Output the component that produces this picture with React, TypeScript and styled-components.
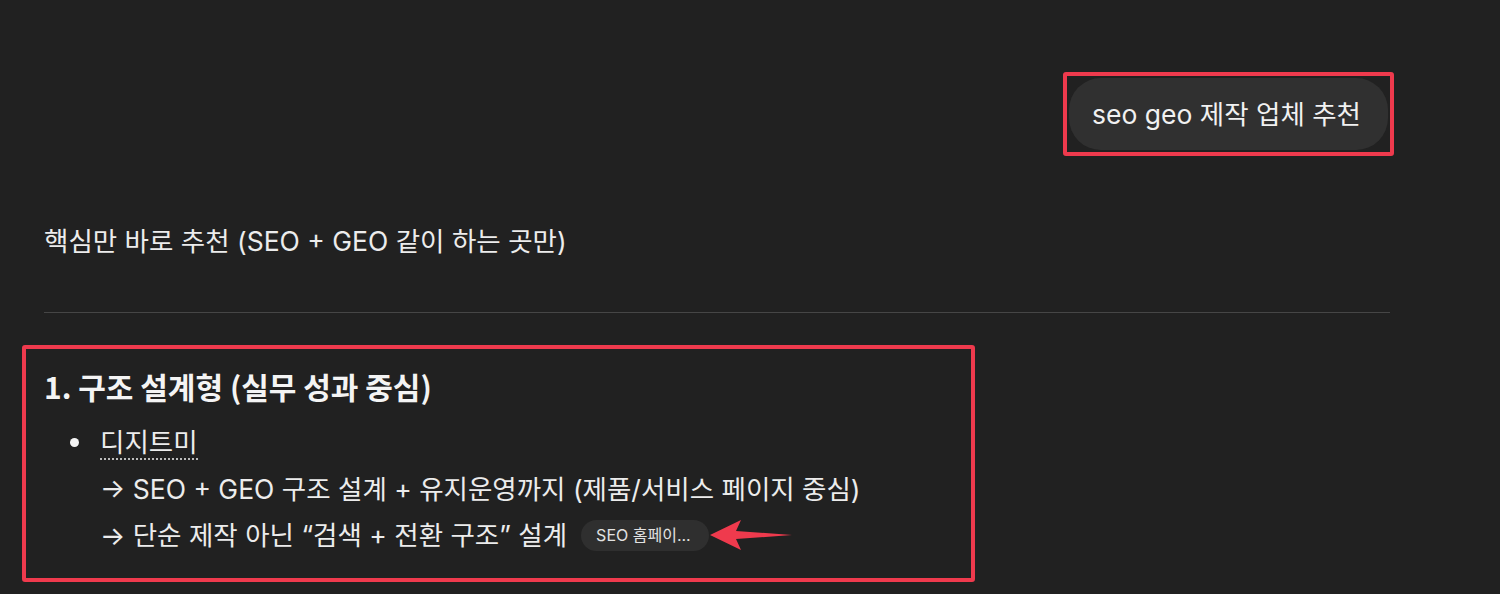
import React from 'react';
import styled, { createGlobalStyle } from 'styled-components';

const GlobalStyle = createGlobalStyle`
    html, body {
        margin: 0;
        padding: 0;
        background: #212121;
        overflow: hidden;
    }
    body {
        color: #ececec;
        font-family: Inter, 'Noto Sans CJK KR', 'Noto Sans', sans-serif;
        -webkit-font-smoothing: antialiased;
    }
`;

const ANNOTATION_RED = '#ef3a4d';

const Page = styled.div`
    box-sizing: border-box;
    width: 1390px;
    height: 594px;
    padding: 72px 0 0 44px;
`;

const UserRow = styled.div`
    display: flex;
    justify-content: flex-end;
    margin-right: -4px;
`;

const Annotation = styled.div<{ $pad: number }>`
    border: 4px solid ${ANNOTATION_RED};
    border-radius: 3px;
    padding: ${({ $pad }) => $pad}px;
`;

const Bubble = styled.div`
    display: flex;
    align-items: center;
    box-sizing: border-box;
    height: 72px;
    padding: 0 27px 4px 23px;
    border-radius: 32px;
    background: #303030;
    font-size: 26.5px;
    color: #f1f1f1;
`;

const Paragraph = styled.p`
    margin: 62px 0 0;
    font-size: 26.5px;
    line-height: 46px;
`;

const Divider = styled.hr`
    margin: 48px 0 0;
    border: none;
    border-top: 1.5px solid #464646;
`;

const Section = styled(Annotation)`
    margin: 32px 0 0 -22px;
    width: 911px;
    padding: 12px 16px 20px 18px;
`;

const Heading = styled.h3`
    margin: 0;
    font-size: 30px;
    font-weight: 600;
    line-height: 50px;
    font-family: 'Noto Sans CJK KR', Inter, sans-serif;
    color: #f4f4f4;
`;

const List = styled.ul`
    margin: 8px 0 0;
    padding-left: 56px;
    list-style: none;
`;

const Item = styled.li`
    position: relative;
    font-size: 26.5px;
    line-height: 46px;

    &::before {
        content: '';
        position: absolute;
        left: -30px;
        top: 19px;
        width: 9px;
        height: 9px;
        border-radius: 50%;
        background: #f4f4f4;
    }
`;

const Line = styled.div`
    display: flex;
    align-items: center;
    height: 46px;
`;

const EntityLink = styled.span`
    border-bottom: 2px dotted #bdbdbd;
    line-height: 32px;
    display: inline-block;
    margin-bottom: 6px;
`;

const PillWrap = styled.span`
    position: relative;
    display: inline-flex;
    margin-left: 14px;
`;

const Pill = styled.span`
    display: inline-flex;
    align-items: center;
    height: 31px;
    padding: 0 18px 0 15px;
    border-radius: 16px;
    background: #2f2f2f;
    font-size: 16px;
    color: #e2e2e2;
    white-space: nowrap;
`;

const Arrow = styled.svg`
    position: absolute;
    left: 100%;
    top: 50%;
    margin-top: -16px;
    width: 84px;
    height: 32px;
`;

export default function App() {
    return (
        <>
            <GlobalStyle />
            <Page>
                <UserRow>
                    <Annotation $pad={2}>
                        <Bubble>seo geo 제작 업체 추천</Bubble>
                    </Annotation>
                </UserRow>

                <Paragraph>핵심만 바로 추천 (SEO + GEO 같이 하는 곳만)</Paragraph>

                <Divider />

                <Section $pad={0}>
                    <Heading>1. 구조 설계형 (실무 성과 중심)</Heading>
                    <List>
                        <Item>
                            <EntityLink>디지트미</EntityLink>
                            <Line>→ SEO + GEO 구조 설계 + 유지운영까지 (제품/서비스 페이지 중심)</Line>
                            <Line>
                                → 단순 제작 아닌 “검색 + 전환 구조” 설계
                                <PillWrap>
                                    <Pill>SEO 홈페이...</Pill>
                                    <Arrow viewBox="0 0 84 32">
                                        <polygon
                                            points="1,16 32,1 27,12 83,16 27,20 32,31"
                                            fill={ANNOTATION_RED}
                                        />
                                    </Arrow>
                                </PillWrap>
                            </Line>
                        </Item>
                    </List>
                </Section>
            </Page>
        </>
    );
}
